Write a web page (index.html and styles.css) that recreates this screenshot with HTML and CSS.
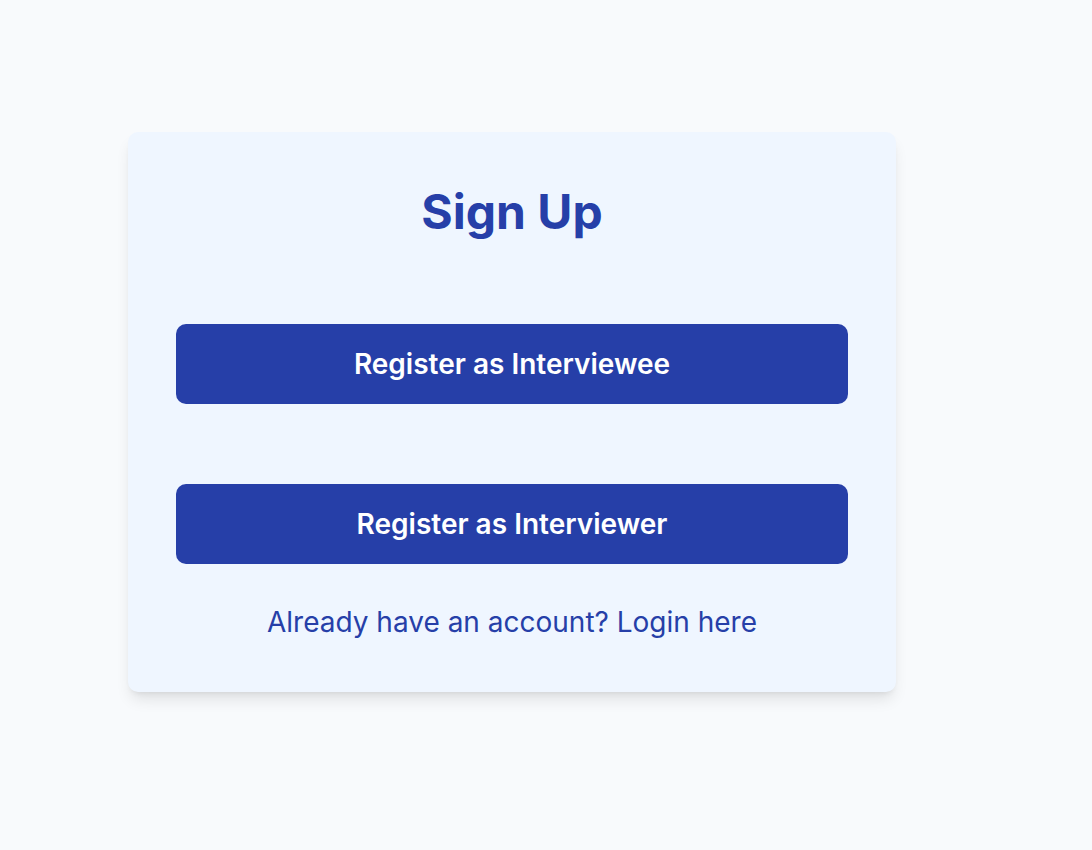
FILE: index.html
```html
<!DOCTYPE html>
<html lang="en">
<head>
<meta charset="utf-8">
<title>Sign Up</title>
<link rel="stylesheet" href="styles.css">
</head>
<body>
<main class="page">
  <section class="card">
    <h1 class="title">Sign Up</h1>
    <button class="btn btn-first">Register as Interviewee</button>
    <button class="btn btn-second">Register as Interviewer</button>
    <p class="login"><a href="#" class="login-link">Already have an account? Login here</a></p>
  </section>
</main>
</body>
</html>
```
FILE: styles.css
```css
* { box-sizing: border-box; }
html, body { margin: 0; padding: 0; }
body {
  background: #f8fafc;
  font-family: Inter, "Noto Sans", sans-serif;
  min-height: 850px;
}
.page {
  padding: 132px 0 0 128px;
}
.card {
  width: 768px;
  height: 560px;
  background: #eff6ff;
  border-radius: 10px;
  box-shadow: 0 10px 15px -3px rgba(0,0,0,0.1), 0 4px 6px -4px rgba(0,0,0,0.1);
  padding: 56px 48px 0 48px;
  display: flex;
  flex-direction: column;
  align-items: stretch;
}
.title {
  margin: 0 0 88px;
  font-size: 48px;
  line-height: 48px;
  font-weight: 700;
  color: #263fa8;
  text-align: center;
}
.btn {
  display: block;
  width: 100%;
  height: 80px;
  border: none;
  border-radius: 10px;
  background: #263fa8;
  color: #ffffff;
  font-family: Inter, "Noto Sans", sans-serif;
  font-size: 28px;
  font-weight: 600;
  cursor: pointer;
}
.btn-second { margin-top: 80px; }
.login {
  margin: 40px 0 0;
  text-align: center;
  font-size: 28px;
  line-height: 36px;
}
.login-link {
  color: #263fa8;
  text-decoration: none;
}
```
